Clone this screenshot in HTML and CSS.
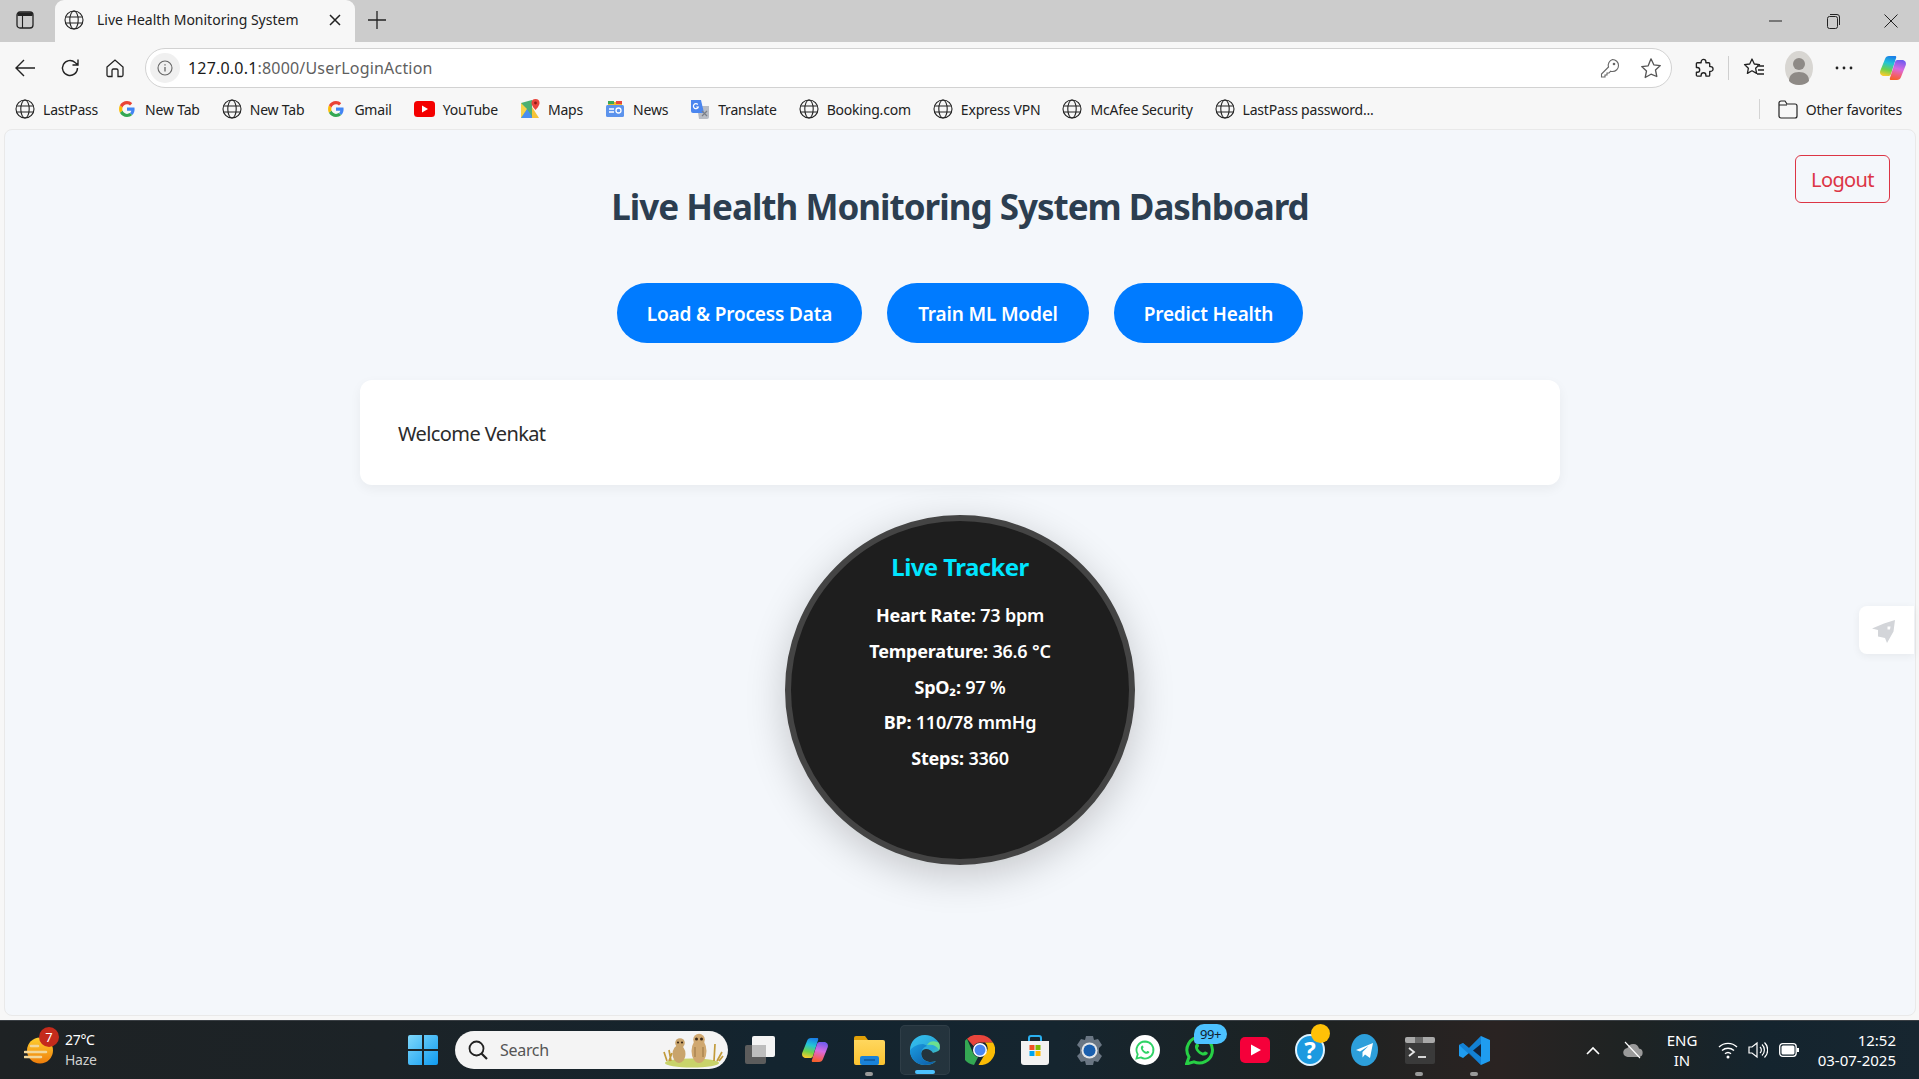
FILE: index.html
```html
<!DOCTYPE html>
<html lang="en">
<head>
<meta charset="utf-8">
<title>Live Health Monitoring System</title>
<link rel="stylesheet" href="styles.css">
</head>
<body>
<svg class="defs" aria-hidden="true">
  <defs>
    <symbol id="globe" viewBox="0 0 20 20"><g fill="none" stroke="#222" stroke-width="1.1"><circle cx="10" cy="10" r="9"/><ellipse cx="10" cy="10" rx="4.2" ry="9"/><path d="M1.6 7h16.8M1.6 13h16.8"/></g></symbol>
    <symbol id="gicon" viewBox="0 0 20 20"><path d="M17.6 10.2c0-.6-.1-1.200-.2-1.700H10v3.200h4.300c-.2 1-.8 1.900-1.600 2.400l2.500 2c1.500-1.400 2.400-3.400 2.400-5.900z" fill="#4285f4"/><path d="M10 18c2.200 0 4-.7 5.200-1.900l-2.500-2c-.7.500-1.600.8-2.700.8-2.100 0-3.900-1.400-4.500-3.300L2.900 13.700C4.200 16.300 6.900 18 10 18z" fill="#34a853"/><path d="M5.500 11.600c-.3-1-.3-2.100 0-3.200L2.900 6.300c-1.100 2.200-1.100 5.200 0 7.400z" fill="#fbbc05"/><path d="M10 5.200c1.200 0 2.200.4 3 1.200l2.200-2.200C13.900 2.800 12.100 2 10 2 6.900 2 4.200 3.700 2.900 6.300l2.600 2.100C6.100 6.500 7.900 5.200 10 5.200z" fill="#ea4335"/></symbol>
    <linearGradient id="cop1" x1="0.6" y1="0" x2="0.4" y2="1"><stop offset="0" stop-color="#1a7fe8"/><stop offset=".35" stop-color="#22c3d8"/><stop offset=".7" stop-color="#6fd24a"/><stop offset="1" stop-color="#f7cb2d"/></linearGradient>
    <linearGradient id="cop2" x1="0.6" y1="0" x2="0.4" y2="1"><stop offset="0" stop-color="#6f5cf0"/><stop offset=".45" stop-color="#d86ae0"/><stop offset=".75" stop-color="#f0607a"/><stop offset="1" stop-color="#f5602c"/></linearGradient>
    <symbol id="copilot" viewBox="0 0 28 28"><path d="M10 2h6c1 0 1.500.7 1.200 1.500L12 20c-.5 1.500-1.500 2-3 2H5c-3 0-4.500-2.500-3.800-5L6 5c.6-2 2-3 4-3z" fill="url(#cop1)"/><path d="M18 26h-6c-1 0-1.500-.7-1.200-1.500L16 8c.5-1.500 1.500-2 3-2h4c3 0 4.500 2.500 3.800 5L22 23c-.6 2-2 3-4 3z" fill="url(#cop2)"/></symbol>
    <linearGradient id="edgeA" x1="0" y1="0" x2="1" y2="1"><stop offset="0" stop-color="#35c1f1"/><stop offset=".6" stop-color="#2aa8d8"/><stop offset="1" stop-color="#66e08a"/></linearGradient>
    <linearGradient id="edgeB" x1="0" y1="0" x2="1" y2="1"><stop offset="0" stop-color="#1b9de2"/><stop offset="1" stop-color="#0c59a4"/></linearGradient>
    <linearGradient id="fold" x1="0" y1="0" x2="0" y2="1"><stop offset="0" stop-color="#ffd75e"/><stop offset="1" stop-color="#fcc330"/></linearGradient>
    <linearGradient id="winlogo" x1="0" y1="0" x2="1" y2="1"><stop offset="0" stop-color="#7fd8fb"/><stop offset="1" stop-color="#0f9bf0"/></linearGradient>
    <linearGradient id="sun" x1="0" y1="0" x2="0" y2="1"><stop offset="0" stop-color="#ffd02e"/><stop offset="1" stop-color="#ef7d0b"/></linearGradient>
  </defs>
</svg>

<div class="window">
  <header class="tabstrip">
    <div class="strip-btn">
      <svg width="18" height="18" viewBox="0 0 18 18"><rect x="1" y="1" width="16" height="16" rx="3" fill="none" stroke="#222" stroke-width="1.300"/><path d="M1.500 5h15V3.500a2 2 0 0 0-2-2h-11a2 2 0 0 0-2 2z" fill="#222"/><path d="M6.500 5v12" stroke="#222" stroke-width="1.100"/></svg>
    </div>
    <div class="tab">
      <svg class="ic20"><use href="#globe"/></svg>
      <span class="tab-title">Live Health Monitoring System</span>
      <svg width="12" height="12" viewBox="0 0 12 12"><path d="M1 1l10 10M11 1L1 11" stroke="#222" stroke-width="1.500"/></svg>
    </div>
    <div class="newtab"><svg width="18" height="18" viewBox="0 0 18 18"><path d="M9 0v18M0 9h18" stroke="#222" stroke-width="1.300"/></svg></div>
    <div class="winctl">
      <span class="winbtn"><svg width="13" height="2" viewBox="0 0 13 2"><path d="M0 1h13" stroke="#222" stroke-width="1"/></svg></span>
      <span class="winbtn"><svg width="13" height="15" viewBox="0 0 13 15"><rect x=".5" y="2.500" width="10" height="12" rx="2" fill="none" stroke="#222"/><path d="M3 .5h7a2.500 2.500 0 0 1 2.500 2.500v8" fill="none" stroke="#222"/></svg></span>
      <span class="winbtn"><svg width="14" height="14" viewBox="0 0 14 14"><path d="M.5.5l13 13M13.500.5l-13 13" stroke="#222"/></svg></span>
    </div>
  </header>

  <nav class="toolbar">
    <span class="tool"><svg width="20" height="18" viewBox="0 0 20 18"><path d="M9 1L1 9l8 8M1 9h19" fill="none" stroke="#222" stroke-width="1.400"/></svg></span>
    <span class="tool"><svg width="20" height="20" viewBox="0 0 20 20"><path d="M17.500 10a7.500 7.500 0 1 1-2.400-5.500L18 7M18 1.500V7h-5.500" fill="none" stroke="#222" stroke-width="1.400"/></svg></span>
    <span class="tool"><svg width="20" height="20" viewBox="0 0 20 20"><path d="M2 9l8-7 8 7v8a1.500 1.500 0 0 1-1.500 1.500H13V12.500a1.500 1.500 0 0 0-1.500-1.500h-3A1.500 1.500 0 0 0 7 12.500v6H3.500A1.500 1.500 0 0 1 2 17z" fill="none" stroke="#222" stroke-width="1.300"/></svg></span>
    <div class="address">
      <span class="info"><svg width="16" height="16" viewBox="0 0 16 16"><circle cx="8" cy="8" r="7" fill="none" stroke="#666" stroke-width="1.100"/><path d="M8 7v4.500M8 4.200v1.300" stroke="#666" stroke-width="1.300"/></svg></span>
      <span class="url"><b class="url-host">127.0.0.1</b>:8000/UserLoginAction</span>
      <span class="addr-right">
        <svg width="20" height="20" viewBox="0 0 20 20"><path d="M12.500 1.500a6 6 0 0 1 0 12c-.7 0-1.300-.1-1.900-.3L9 15H7v2H5v2H1.500v-3l7-7a6 6 0 0 1 4-7.500z" fill="none" stroke="#666" stroke-width="1.100"/><circle cx="14" cy="6" r="1.300" fill="#666"/></svg>
        <svg width="22" height="22" viewBox="0 0 22 22"><path d="M11 1.800l2.800 6 6.500.8-4.800 4.400 1.300 6.500L11 17.200l-5.800 3.300 1.300-6.500L1.700 9.600l6.500-.8z" fill="none" stroke="#555" stroke-width="1.300" stroke-linejoin="round"/></svg>
      </span>
    </div>
    <span class="tool tool-first"><svg width="20" height="20" viewBox="0 -1 21 21"><path d="M7.500 4V3a2.500 2.500 0 0 1 5 0v1h3a1 1 0 0 1 1 1v3h1a2.500 2.500 0 0 1 0 5h-1v4a1 1 0 0 1-1 1h-3v-1a2.500 2.500 0 0 0-5 0v1h-4a1 1 0 0 1-1-1v-3h1a2.500 2.500 0 0 0 0-5h-1V5a1 1 0 0 1 1-1z" fill="none" stroke="#222" stroke-width="1.400" stroke-linejoin="round"/></svg></span>
    <span class="tool-div"></span>
    <span class="tool"><svg width="22" height="22" viewBox="0 0 22 22"><path d="M9 2l2.300 5 5.200.6-3.900 3.600 1 5.200L9 13.800l-4.600 2.600 1-5.200L1.500 7.600 6.700 7zM14 9h7M15 13h6M14 17h7" fill="none" stroke="#222" stroke-width="1.300" stroke-linejoin="round"/></svg></span>
    <span class="tool"><span class="avatar"><svg width="28" height="34" viewBox="0 0 28 34"><ellipse cx="14" cy="17" rx="14" ry="17" fill="#d8d6d2"/><circle cx="14" cy="13" r="6" fill="#8e8a86"/><path d="M4 30c0-6 4-9 10-9s10 3 10 9c-2 2.500-6 4-10 4s-8-1.500-10-4z" fill="#8e8a86"/></svg></span></span>
    <span class="tool"><svg width="18" height="4" viewBox="0 0 18 4"><circle cx="2" cy="2" r="1.400" fill="#222"/><circle cx="9" cy="2" r="1.400" fill="#222"/><circle cx="16" cy="2" r="1.400" fill="#222"/></svg></span>
    <span class="tool tool-copilot"><svg class="ic28"><use href="#copilot"/></svg></span>
  </nav>

  <nav class="bookmarks">
    <a class="bm bm-first"><svg class="ic20"><use href="#globe"/></svg>LastPass</a>
    <a class="bm"><svg class="ic20"><use href="#gicon"/></svg>New Tab</a>
    <a class="bm"><svg class="ic20"><use href="#globe"/></svg>New Tab</a>
    <a class="bm"><svg class="ic20"><use href="#gicon"/></svg>Gmail</a>
    <a class="bm"><svg width="21" height="16" viewBox="0 0 21 16"><rect width="21" height="16" rx="3.500" fill="#f40000"/><path d="M8 4.500l6 3.500-6 3.500z" fill="#fff"/></svg>YouTube</a>
    <a class="bm"><svg class="ic20" viewBox="0 0 20 20"><path d="M1 4l11-3v18H1z" fill="#4caf72"/><path d="M1 19l6-9 6 9z" fill="#4a8ff0"/><path d="M1 4l6 6-6 9z" fill="#f7d34a"/><path d="M12 19V8l7 11z" fill="#f5c438"/><path d="M15.500 0a4 4 0 0 1 4 4c0 3-4 7-4 7s-4-4-4-7a4 4 0 0 1 4-4z" fill="#e8453c"/><circle cx="15.500" cy="4" r="1.400" fill="#8a1c14"/></svg>Maps</a>
    <a class="bm"><svg class="ic20" viewBox="0 0 20 20"><path d="M3 3h14v4H3z" fill="#f0bb2c"/><path d="M3 2h6v3H3z" fill="#3aa757"/><path d="M11 2h6v3h-6z" fill="#e8453c"/><rect x="1" y="6" width="18" height="12" rx="1.500" fill="#5c93ec"/><path d="M4 10h5M4 13h5" stroke="#fff" stroke-width="1.400"/><circle cx="13.500" cy="11.500" r="2.500" fill="none" stroke="#fff" stroke-width="1.300"/></svg>News</a>
    <a class="bm"><svg class="ic20" viewBox="0 0 20 20"><path d="M7 7h12v11a2 2 0 0 1-2 2H9z" fill="#b8bcc4"/><path d="M1 1h10l3 13H3a2 2 0 0 1-2-2z" fill="#4b86ef"/><path d="M7.800 5.500A2.500 2.500 0 1 0 8.300 8H6.300" fill="none" stroke="#fff" stroke-width="1.200"/><path d="M12 12l5 5M17 12l-5 5" stroke="#7b7f88" stroke-width="1.200"/></svg>Translate</a>
    <a class="bm"><svg class="ic20"><use href="#globe"/></svg>Booking.com</a>
    <a class="bm"><svg class="ic20"><use href="#globe"/></svg>Express VPN</a>
    <a class="bm"><svg class="ic20"><use href="#globe"/></svg>McAfee Security</a>
    <a class="bm"><svg class="ic20"><use href="#globe"/></svg>LastPass password...</a>
    <span class="bm-div"></span>
    <a class="bm bm-other"><svg width="20" height="19" viewBox="0 0 20 19"><path d="M1 16V3a2 2 0 0 1 2-2h4l2 3h8a2 2 0 0 1 2 2v10a2 2 0 0 1-2 2H3a2 2 0 0 1-2-2zM1 5h8" fill="none" stroke="#222" stroke-width="1.200"/></svg>Other favorites</a>
  </nav>

  <main class="page">
    <a class="logout">Logout</a>
    <h1 class="title">Live Health Monitoring System Dashboard</h1>
    <div class="actions">
      <a class="action action-load">Load &amp; Process Data</a>
      <a class="action action-train">Train ML Model</a>
      <a class="action action-predict">Predict Health</a>
    </div>
    <section class="card">Welcome Venkat</section>
    <section class="tracker">
      <h3 class="tracker-title">Live Tracker</h3>
      <p class="stat"><b>Heart Rate:</b> 73 bpm</p>
      <p class="stat"><b>Temperature:</b> 36.6 °C</p>
      <p class="stat"><b>SpO₂:</b> 97 %</p>
      <p class="stat"><b>BP:</b> 110/78 mmHg</p>
      <p class="stat"><b>Steps:</b> 3360</p>
    </section>
    <aside class="sidetool">
      <svg width="23" height="24" viewBox="0 0 23 24"><path d="M23 0l-1.500 11.500L15 23l-2-5-7-1.500V10L0 8.500 12 3.500z" fill="#d3d5d9"/><path d="M15.500 6.500l3 0-.5 3-2.500 0z" fill="#fff"/></svg>
    </aside>
  </main>

  <footer class="taskbar">
    <div class="weather">
      <span class="weather-icon">
        <svg width="30" height="27" viewBox="0 0 30 27"><ellipse cx="16" cy="13.500" rx="13" ry="13" fill="url(#sun)"/><path d="M7 9h7M1 15h21M1 20h16" stroke="#f2d79a" stroke-width="2.600" stroke-linecap="round"/></svg>
        <span class="weather-badge">7</span>
      </span>
      <span class="weather-text"><span>27°C</span><span class="haze">Haze</span></span>
    </div>
    <div class="tb-item">
      <svg width="30" height="30" viewBox="0 0 30 30"><path d="M0 2a2 2 0 0 1 2-2h12v14H0zM16 0h12a2 2 0 0 1 2 2v12H16zM0 16h14v14H2a2 2 0 0 1-2-2zM16 16h14v12a2 2 0 0 1-2 2H16z" fill="url(#winlogo)"/></svg>
    </div>
    <div class="search">
      <svg width="20" height="20" viewBox="0 0 20 20"><circle cx="8.500" cy="8.500" r="7" fill="none" stroke="#222" stroke-width="1.800"/><path d="M13.500 13.500l5.500 5.500" stroke="#222" stroke-width="2.200"/></svg>
      <span class="search-text">Search</span>
      <svg class="meerkats" width="66" height="38" viewBox="0 0 66 38">
        <ellipse cx="30" cy="32" rx="27" ry="4.500" fill="#c9d36a"/>
        <path d="M5 30L2 21M7 30l3-8M9 30L7 19M52 30l1-17M55 30l5-9M57 30l4-5" stroke="#c29b3c" stroke-width="1.700"/>
        <ellipse cx="17" cy="23" rx="6.500" ry="9" fill="#c9a46c"/><circle cx="18" cy="12" r="4.800" fill="#c9a46c"/><circle cx="16" cy="11.500" r="1.100" fill="#3d2a18"/><circle cx="20" cy="11.500" r="1.100" fill="#3d2a18"/>
        <ellipse cx="37" cy="20" rx="7.500" ry="12" fill="#d0a870"/><circle cx="37" cy="8.500" r="5.800" fill="#d0a870"/><circle cx="34.500" cy="8" r="1.500" fill="#3d2a18"/><circle cx="39.500" cy="8" r="1.500" fill="#3d2a18"/><path d="M33 16v10M41 16v10" stroke="#a98350" stroke-width="1.400"/>
      </svg>
    </div>
    <div class="tb-apps">
      <span class="tb-item"><svg width="30" height="28" viewBox="0 0 30 28"><rect y="9" width="21" height="19" rx="2" fill="#5c5c5c"/><rect x="7" width="23" height="21" rx="2" fill="#f4f4f4"/><rect x="7" y="9" width="14" height="12" fill="#bdbdbd"/></svg></span>
      <span class="tb-item"><svg class="ic28"><use href="#copilot"/></svg></span>
      <span class="tb-item tb-open"><svg width="31" height="30" viewBox="0 0 31 30"><path d="M0 3a2 2 0 0 1 2-2h9l3 4h-14z" fill="#e0a008"/><path d="M0 5h29a2 2 0 0 1 2 2v21a2 2 0 0 1-2 2H2a2 2 0 0 1-2-2z" fill="url(#fold)"/><rect x="6" y="21" width="19" height="9" rx="2" fill="#1a82d8"/><path d="M10 25h11" stroke="#0f4f8e" stroke-width="1.300"/></svg></span>
      <span class="tb-item tb-active"><svg class="tb-edge" width="30" height="30" viewBox="0 0 30 30"><path d="M15 0C6 0 0 7 0 15c0 9 7 15 15 15 4 0 8-1 11-4-5 2-12 1-14-4-2-4 0-8 4-8 3 0 6 2 7 4 3-1 7-2 7-5C30 6 23 0 15 0z" fill="url(#edgeA)"/><path d="M13 9C6 9 0 14 0 16c0 8 7 14 15 14 4 0 8-1 11-4-5 2-12 1-14-4-2-5 0-9 5-11-1-1-3-2-4-2z" fill="url(#edgeB)"/><path d="M17 10c6-1 10 1 12 5 1-3 1-5 0-7-3-2-9-3-12 2z" fill="#6be08f"/></svg></span>
      <span class="tb-item"><svg width="30" height="30" viewBox="0 0 30 30"><path d="M15 0a15 15 0 0 1 13 7.500H15A7.500 7.500 0 0 0 8.500 11L2 3.800A15 15 0 0 1 15 0z" fill="#e8453c"/><path d="M2 3.800L8.500 19A7.500 7.500 0 0 0 13 22.300L9 30A15 15 0 0 1 2 3.800z" fill="#34a853"/><path d="M28 7.500A15 15 0 0 1 13.500 30l6.500-11a7.500 7.500 0 0 0 0-11.500z" fill="#fbbc05"/><circle cx="15" cy="15" r="7" fill="#fff"/><circle cx="15" cy="15" r="5.500" fill="#4a86f0"/></svg></span>
      <span class="tb-item"><svg width="30" height="30" viewBox="0 0 30 30"><path d="M9 6V3a2 2 0 0 1 2-2h8a2 2 0 0 1 2 2v3" fill="none" stroke="#2ab0f0" stroke-width="2"/><path d="M1 6h28v21a3 3 0 0 1-3 3H4a3 3 0 0 1-3-3z" fill="#f2f2f2"/><path d="M9.500 10H14.500V15H9.500z" fill="#f25022"/><path d="M15.500 10H20.500V15H15.500z" fill="#7fba00"/><path d="M9.500 16H14.500V21H9.500z" fill="#00a4ef"/><path d="M15.500 16H20.500V21H15.500z" fill="#ffb900"/></svg></span>
      <span class="tb-item"><svg width="31" height="31" viewBox="0 0 31 31"><path d="M12 1h7l1 4 4-1 4 6-3 3v5l3 3-4 6-4-1-1 4h-7l-1-4-4 1-4-6 3-3v-5L3 10l4-6 4 1z" fill="#6a7683"/><circle cx="15.500" cy="15.500" r="8" fill="#e4e6e8"/><circle cx="15.500" cy="15.500" r="6" fill="#1a5fae"/></svg></span>
      <span class="tb-item"><svg width="30" height="30" viewBox="0 0 30 30"><circle cx="15" cy="15" r="15" fill="#fff"/><path d="M15 6.500a8.500 8.500 0 0 0-7.300 12.800L6.500 23.500l4.300-1.100A8.500 8.500 0 1 0 15 6.500z" fill="none" stroke="#2fd366" stroke-width="1.800"/><path d="M11.500 11c1-1 1.500-.5 2 1 .3.800-1 1.300-.6 2 .8 1.400 1.800 2.200 3 2.800.7.300 1.200-1 2-.7 1.500.6 2 1 1 2-1.500 1.400-4 .7-6-1.200s-2.800-4.500-1.400-5.900z" fill="#2fd366"/></svg></span>
      <span class="tb-item">
        <svg width="30" height="30" viewBox="0 0 30 30"><path d="M15 2a13 13 0 0 0-11 20L1.500 29l7.500-2.200A13 13 0 1 0 15 2z" fill="none" stroke="#27d045" stroke-width="3"/><path d="M11 9c1.500-1.500 2-.5 3 1.500.5 1-1.500 2-1 3 1 2 2.500 3 4.500 4 1 .5 1.800-1.500 3-1 2.500 1 3 1.500 1.500 3-2.300 2-6 1-9-1.800S9 11.200 11 9z" fill="#27d045"/></svg>
        <span class="count-badge">99+</span>
      </span>
      <span class="tb-item"><svg width="30" height="26" viewBox="0 0 30 26"><rect width="30" height="26" rx="5" fill="#f5003a"/><path d="M11 7.500l10 5.500-10 5.500z" fill="#fff"/></svg></span>
      <span class="tb-item">
        <svg width="30" height="32" viewBox="0 0 30 32"><ellipse cx="15" cy="16" rx="14" ry="15" fill="#1b9ae0" stroke="#dff3ff" stroke-width="2"/><text class="help-mark" x="15" y="25" text-anchor="middle">?</text></svg>
        <span class="dot-badge"></span>
      </span>
      <span class="tb-item"><svg width="27" height="32" viewBox="0 0 27 32"><ellipse cx="13.500" cy="16" rx="13.500" ry="16" fill="#2d9fdb"/><path d="M5 16l17-7-3 15-5-3.500-2.500 3V18l6-6-8.500 5.500z" fill="#fff"/></svg></span>
      <span class="tb-item tb-open"><svg width="30" height="27" viewBox="0 0 30 27"><rect width="30" height="27" rx="2" fill="#3a3a3a"/><rect width="30" height="6" rx="2" fill="#a9a9a9"/><rect x="10" width="8" height="6" fill="#6b6b6b"/><path d="M4 11l5 4-5 4" fill="none" stroke="#e8e8e8" stroke-width="1.800"/><path d="M13 20h8" stroke="#e8e8e8" stroke-width="1.800"/></svg></span>
      <span class="tb-item tb-open"><svg width="31" height="31" viewBox="0 0 31 31"><path d="M22 1l9 4v21l-9 4-12-12-6 5-4-2V10l4-2 6 5z" fill="#1f9cf0"/><path d="M22 1L10 13l-6-5-4 2 22 20z" fill="#0a6bc0" opacity=".55"/><path d="M22 9v13l-8-6.500z" fill="#14233a"/></svg></span>
    </div>
    <div class="tray">
      <span class="tray-item tray-chev"><svg width="14" height="9" viewBox="0 0 14 9"><path d="M1 8l6-6 6 6" fill="none" stroke="#fff" stroke-width="1.600"/></svg></span>
      <span class="tray-item tray-cloud"><svg width="22" height="18" viewBox="0 0 22 18"><path d="M6 16a4.500 4.500 0 0 1-.5-9A6 6 0 0 1 17 7.500 4.300 4.300 0 0 1 17 16z" fill="#9a9a9a"/><path d="M3 1l15 16" stroke="#fff" stroke-width="1.100"/></svg></span>
      <span class="tray-item tray-lang"><span>ENG</span><span>IN</span></span>
      <span class="tray-item tray-wifi"><svg width="20" height="18" viewBox="0 0 20 18"><path d="M1 6a13 13 0 0 1 18 0M4 9.500a9 9 0 0 1 12 0M7 12.800a4.500 4.500 0 0 1 6 0" fill="none" stroke="#fff" stroke-width="1.400"/><circle cx="10" cy="16" r="1.500" fill="#fff"/></svg></span>
      <span class="tray-item tray-vol"><svg width="20" height="20" viewBox="0 0 20 20"><path d="M1 7h3l5-4v14l-5-4H1z" fill="none" stroke="#fff" stroke-width="1.200"/><path d="M12 7a4 4 0 0 1 0 6M14 4.500a7.500 7.500 0 0 1 0 11M16.500 2.500a10.500 10.500 0 0 1 0 15" fill="none" stroke="#fff" stroke-width="1.200"/></svg></span>
      <span class="tray-item tray-batt"><svg width="20" height="14" viewBox="0 0 20 14"><rect x=".7" y=".7" width="16.500" height="12.600" rx="3" fill="none" stroke="#fff" stroke-width="1.300"/><rect x="2.500" y="2.500" width="13" height="9" rx="1.500" fill="#fff"/><rect x="18" y="5" width="2" height="4" fill="#fff"/></svg></span>
      <span class="tray-item tray-clock"><span>12:52</span><span>03-07-2025</span></span>
    </div>
  </footer>
</div>
</body>
</html>
```

FILE: styles.css
```css
* { box-sizing: border-box; }
html, body { margin: 0; padding: 0; height: 100%; overflow: hidden; }
body { font-family: "Noto Sans", "Open Sans", sans-serif; color: #222; }
.defs { position: absolute; width: 0; height: 0; }
.ic20 { width: 20px; height: 20px; flex: none; }
.ic28 { width: 28px; height: 28px; flex: none; }
svg { flex: none; display: block; }

.window { display: flex; flex-direction: column; height: 1079px; background: #f7f7f7; }

.tabstrip { display: flex; align-items: center; height: 42px; background: #cccccc; flex: none; }
.strip-btn { width: 55px; display: flex; justify-content: center; padding: 0 5px 3px 0; }
.tab { display: flex; align-items: center; width: 300px; height: 42px; background: #f7f7f7; border-radius: 9px 9px 0 0; padding: 0 14px 3px 9px; }
.tab-title { flex: 1; margin-left: 13px; font-size: 14px; letter-spacing: 0; white-space: nowrap; }
.newtab { margin-left: 13px; padding-bottom: 3px; }
.winctl { display: flex; margin-left: auto; margin-right: -1px; }
.winbtn { display: flex; justify-content: center; align-items: center; width: 58px; height: 42px; }

.toolbar { display: flex; align-items: flex-end; height: 46px; padding: 0 4px 0 2px; flex: none; }
.tool { display: flex; align-items: center; justify-content: center; width: 45px; height: 40px; flex: none; }
.tool-first { margin-left: 9px; }
.tool-copilot { margin-left: 4px; }
.tool-div { width: 1px; height: 24px; background: #cfcfcf; margin: 0 2px 8px; flex: none; }
.avatar { display: block; }
.address { display: flex; align-items: center; flex: 1; height: 40px; margin-left: 8px; background: #fff; border: 1px solid #d2d2d2; border-radius: 20px; padding: 0 9px 0 3.500px; }
.info { display: flex; align-items: center; justify-content: center; width: 30px; height: 30px; border-radius: 50%; background: #f0f0f0; flex: none; }
.url { margin-left: 8.500px; font-size: 16px; color: #5f5f5f; letter-spacing: .19px; white-space: nowrap; }
.url-host { font-weight: 400; color: #1a1a1a; }
.addr-right { display: flex; align-items: center; gap: 20px; margin-left: auto; }

.bookmarks { display: flex; align-items: center; height: 41px; padding: 1px 17px 0 15px; flex: none; }
.bm { display: flex; align-items: center; gap: 8px; margin-right: 22px; font-size: 14px; letter-spacing: -.2px; white-space: nowrap; }
.bm-first { margin-right: 19px; }
.bm-div { width: 1px; height: 20px; background: #d4d4d4; margin-left: auto; margin-right: 18px; }
.bm-other { margin-right: 0; }

.page { position: relative; flex: 1; margin: 0 3px 4px 4px; background: #f4f7fb; border: 1px solid #e9e9e9; border-radius: 8px; padding-top: 47px; display: flex; flex-direction: column; align-items: center; min-height: 0; }
.logout { position: absolute; top: 25px; right: 25px; width: 95px; height: 48px; display: flex; align-items: center; justify-content: center; font-size: 20px; color: #dc3545; border: 1px solid #dc3545; border-radius: 6px; letter-spacing: -.6px; }
.title { margin: 0 0 46px; font-size: 35px; line-height: 60px; font-weight: 700; color: #2c3e50; letter-spacing: -1px; white-space: nowrap; }
.actions { display: flex; gap: 25px; margin-bottom: 37px; }
.action { display: flex; align-items: center; justify-content: center; height: 60px; padding-top: 2px; border-radius: 30px; background: #007bff; color: #fff; font-size: 19px; font-weight: 600; letter-spacing: -.17px; }
.action-load { width: 245px; }
.action-train { width: 202px; }
.action-predict { width: 189px; }
.card { width: 1200px; height: 105px; padding: 40px 38px 0; background: #fff; border-radius: 12px; box-shadow: 0 4px 12px rgba(0,0,0,.05); font-size: 20px; line-height: 27px; letter-spacing: -.6px; color: #2b2b2b; margin-bottom: 30px; }
.tracker { width: 350px; height: 350px; border-radius: 50%; background: #1e1e1e; border: 6px solid #444; box-shadow: 0 10px 40px rgba(0,0,0,.2); padding-top: 30px; text-align: center; color: #fff; }
.tracker-title { margin: 0 0 15px; font-size: 24px; line-height: 32px; font-weight: 700; color: #00e5ff; letter-spacing: -.6px; }
.stat { margin: 0; font-size: 18px; line-height: 35.800px; font-weight: 600; letter-spacing: -.2px; }
.stat b { font-weight: 700; }
.sidetool { position: absolute; top: 476px; right: 1px; width: 55px; height: 48px; padding: 4px 6px 0 0; background: #fff; border-radius: 8px 0 0 8px; box-shadow: 0 2px 8px rgba(0,0,0,.06); display: flex; align-items: center; justify-content: center; }

.taskbar { position: relative; display: flex; align-items: center; height: 59px; flex: none; color: #fff; border-top: 1px solid #3a3f44; background: linear-gradient(90deg, #1e2224 0, #1c2327 20%, #13242f 40%, #15252f 55%, #1d2222 68%, #2a2322 78%, #1e2323 85%, #14242e 92%, #172630 100%); }
.weather { display: flex; align-items: center; width: 395px; padding-left: 24px; }
.weather-icon { position: relative; display: block; }
.weather-badge { position: absolute; top: -10px; left: 15px; width: 20px; height: 20px; border-radius: 50%; background: #c42b1c; font-size: 13px; line-height: 20px; text-align: center; }
.weather-text { display: flex; flex-direction: column; margin-left: 11px; font-size: 14px; line-height: 20px; letter-spacing: -.3px; }
.haze { color: #cfcfcf; }
.tb-item { position: relative; display: flex; align-items: center; justify-content: center; width: 55px; height: 50px; flex: none; }
.search { display: flex; align-items: center; width: 273px; height: 38px; margin-left: 5px; padding-left: 13px; background: #f4f4f4; border-radius: 19px; color: #555; flex: none; overflow: hidden; }
.search-text { margin-left: 12px; font-size: 16px; letter-spacing: -.3px; }
.meerkats { margin-left: auto; }
.tb-apps { display: flex; margin-left: 4px; }
.tb-active::before { content: ""; position: absolute; inset: 0 2.500px; background: rgba(255,255,255,.07); border-radius: 5px; border: 1px solid rgba(255,255,255,.05); }
.tb-edge { position: relative; }
.tb-active::after { content: ""; position: absolute; left: 17.500px; bottom: 1px; width: 20px; height: 4px; border-radius: 2px; background: #4cc2ff; }
.tb-open::after { content: ""; position: absolute; left: 23px; bottom: -1px; width: 8px; height: 4px; border-radius: 2px; background: #9a9a9a; }
.count-badge { position: absolute; top: -1px; left: 22px; width: 33px; height: 20px; border-radius: 10px 10px 10px 4px; background: #4cc2ff; color: #102030; font-size: 13px; line-height: 20px; text-align: center; letter-spacing: -.4px; }
.dot-badge { position: absolute; top: -1px; left: 29px; width: 19px; height: 19px; border-radius: 50%; background: #ffc107; }
.help-mark { font-size: 24px; font-weight: 700; fill: #fff; font-family: "Noto Sans", sans-serif; }
.tray { display: flex; align-items: center; margin-left: auto; padding-right: 23px; font-size: 15px; line-height: 20px; }
.tray-item { display: flex; align-items: center; justify-content: center; flex: none; }
.tray-chev, .tray-cloud { width: 40px; }
.tray-lang { width: 58px; flex-direction: column; }
.tray-wifi { width: 33px; }
.tray-vol { width: 28px; }
.tray-batt { width: 34px; }
.tray-clock { width: 90px; flex-direction: column; align-items: flex-end; }
```
